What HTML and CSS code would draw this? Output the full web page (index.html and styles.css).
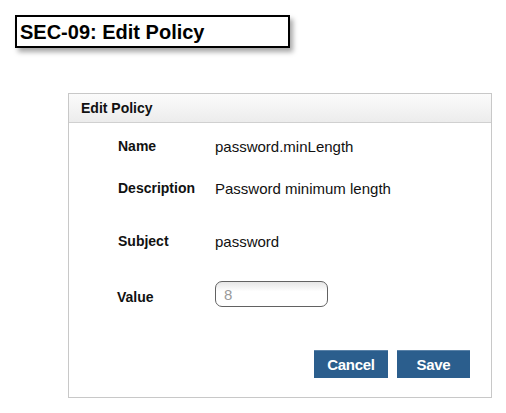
FILE: index.html
```html
<!DOCTYPE html>
<html>
<head>
<meta charset="utf-8">
<link rel="stylesheet" href="styles.css">
</head>
<body>
<div class="page-title">SEC-09: Edit Policy</div>
<div class="panel">
  <div class="panel-head">Edit Policy</div>
  <div class="panel-body">
    <div class="row r-name">
      <div class="label">Name</div>
      <div class="value">password.minLength</div>
    </div>
    <div class="row r-desc">
      <div class="label">Description</div>
      <div class="value">Password minimum length</div>
    </div>
    <div class="row r-subj">
      <div class="label">Subject</div>
      <div class="value">password</div>
    </div>
    <div class="row r-val">
      <div class="label label-val">Value</div>
      <input class="field" type="text" placeholder="8">
    </div>
    <div class="actions">
      <button class="btn btn-cancel">Cancel</button>
      <button class="btn btn-save">Save</button>
    </div>
  </div>
</div>
</body>
</html>
```

FILE: styles.css
```css
html, body {
  margin: 0;
  padding: 0;
  background: #fff;
}
body {
  font-family: "Liberation Sans", Arial, sans-serif;
  color: #111;
  width: 506px;
  height: 413px;
  overflow: hidden;
}
.page-title {
  display: block;
  margin: 15px 0 0 15px;
  width: 268px;
  height: 29px;
  padding-left: 3px;
  border: 2px solid #000;
  box-shadow: 3px 4px 5px rgba(0, 0, 0, 0.35);
  font-size: 20px;
  font-weight: bold;
  line-height: 30px;
  color: #000;
}
.panel {
  margin: 45px 0 0 68px;
  width: 422px;
  border: 1px solid #c8c8c8;
  background: #fff;
}
.panel-head {
  height: 28px;
  line-height: 28px;
  padding-left: 12px;
  font-size: 14px;
  font-weight: bold;
  color: #111;
  background: linear-gradient(#fbfbfb, #ececec);
  border-bottom: 1px solid #d0d0d0;
}
.panel-body {
  padding: 12px 21px 19px 49px;
  display: flex;
  flex-direction: column;
}
.row {
  display: flex;
  align-items: center;
  height: 22px;
}
.r-desc { margin-top: 20px; }
.r-subj { margin-top: 31px; }
.r-val { margin-top: 29px; height: 26px; }
.label {
  width: 97px;
  font-size: 14px;
  font-weight: bold;
  color: #111;
}
.label-val {
  margin-top: 6px;
  margin-left: -1px;
  width: 98px;
}
.value {
  font-size: 15px;
  color: #111;
}
.field {
  box-sizing: border-box;
  width: 113px;
  height: 26px;
  margin: 0;
  padding: 0 0 0 8px;
  border: 1px solid #626262;
  border-radius: 7px;
  background: linear-gradient(#e6e6e6, #fff 40%);
  font-family: "Liberation Sans", Arial, sans-serif;
  font-size: 15px;
  color: #333;
  outline: none;
}
.field::placeholder {
  color: #9a9a9a;
}
.actions {
  margin-top: 43px;
  display: flex;
  justify-content: flex-end;
  gap: 9px;
}
.btn {
  height: 28px;
  margin: 0;
  padding: 0;
  border: none;
  border-top: 1px solid #5a82a8;
  background: #2b5e8d;
  color: #fff;
  font-family: "Liberation Sans", Arial, sans-serif;
  font-size: 15px;
  font-weight: bold;
  letter-spacing: -0.3px;
}
.btn-cancel { width: 74px; }
.btn-save { width: 73px; }
```
